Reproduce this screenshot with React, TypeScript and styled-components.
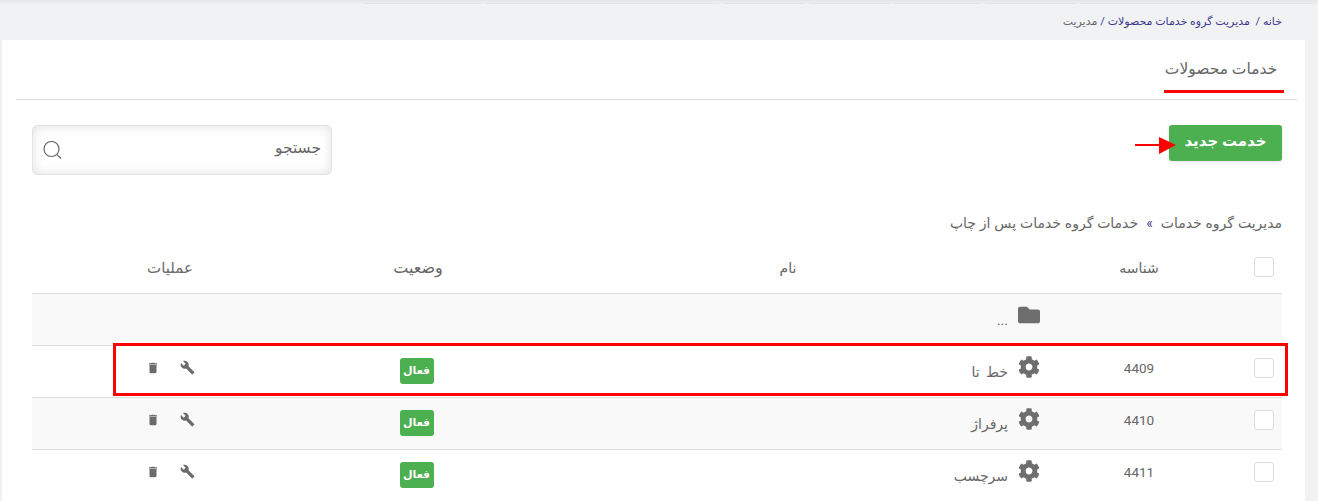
import React from 'react';
import styled, { createGlobalStyle } from 'styled-components';
import { FaCog, FaFolder } from 'react-icons/fa';
import { MdBuild, MdDelete } from 'react-icons/md';

const GlobalStyle = createGlobalStyle`
  html, body {
    margin: 0;
    padding: 0;
    height: 100%;
    overflow: hidden;
    background: #f1f2f4;
    font-family: 'Roboto', 'DejaVu Sans', sans-serif;
    color: #666;
  }
`;

const Page = styled.div`
  direction: rtl;
  position: relative;
  width: 1318px;
  height: 501px;
  overflow: hidden;
  background: #f1f2f4;
`;

const TopBar = styled.div`
  direction: ltr;
  display: flex;
  align-items: flex-end;
  gap: 4px;
  height: 4px;
  padding-left: 363px;
  box-sizing: border-box;
  background: linear-gradient(#e4e5e7, #eff0f2);
`;

const TopSegment = styled.span<{ $width: number }>`
  width: ${(p) => p.$width}px;
  height: 1px;
  background: #e3e4e6;
`;

const Breadcrumb = styled.div`
  display: flex;
  align-items: center;
  gap: 3px;
  height: 36px;
  padding: 0 36px 1px 0;
  box-sizing: border-box;
  font-size: 11px;
  color: #666;
`;

const Crumb = styled.a`
  color: #3d3a8c;
  text-decoration: none;
`;

const Panel = styled.div`
  margin: 0 13px 0 2px;
  height: 470px;
  background: #fff;
  padding: 0 8px 0 0;
  box-sizing: border-box;
`;

const Tabs = styled.div`
  display: flex;
  height: 59px;
  margin-left: 14px;
  border-bottom: 1px solid #ddd;
  padding-right: 13px;
`;

const Tab = styled.div`
  width: 120px;
  height: 53px;
  padding: 8px 6px 0 0;
  box-sizing: border-box;
  display: flex;
  align-items: center;
  justify-content: center;
  border-bottom: 3px solid #f00;
  font-size: 15.5px;
  color: #666;
`;

const Content = styled.div`
  padding: 25px 15px 0 0;
  margin-left: 30px;
`;

const Toolbar = styled.div`
  display: flex;
  justify-content: space-between;
  align-items: flex-start;
`;

const NewButton = styled.button`
  width: 113px;
  height: 36px;
  padding: 0 0 4px;
  border: 0;
  border-radius: 3px;
  background: #4caf50;
  color: #fff;
  font-family: inherit;
  font-size: 15px;
  font-weight: 700;
  box-shadow: 0 1px 3px rgba(0, 0, 0, 0.12);
`;

const SearchBox = styled.div`
  width: 300px;
  height: 50px;
  display: flex;
  align-items: center;
  justify-content: space-between;
  padding: 0 10px;
  box-sizing: border-box;
  border: 1px solid #e3e3e3;
  border-radius: 5px;
  background: #fff;
  box-shadow: inset 0 0 12px rgba(0, 0, 0, 0.12);
  font-size: 15.5px;
  color: #666;
`;

const SearchLabel = styled.span`
  margin-bottom: 4px;
`;

const Trail = styled.div`
  display: flex;
  gap: 8px;
  margin: 38px 0 7px;
  height: 20px;
  align-items: center;
  font-size: 14px;
  word-spacing: 0.4px;
  color: #666;
`;

const TrailSep = styled.span`
  color: #3d3a8c;
`;

const Row = styled.div<{ $striped?: boolean; $head?: boolean }>`
  display: grid;
  grid-template-columns: 44px 198px 504px 236px 1fr;
  align-items: center;
  height: ${(p) => (p.$head ? '53px' : '43px')};
  padding-bottom: ${(p) => (p.$head ? '0' : '8px')};
  background: ${(p) => (p.$striped ? '#f9f9f9' : '#fff')};
  border-bottom: 1px solid #ddd;
  &:last-child {
    border-bottom: 0;
  }
`;

const Cell = styled.div<{ $center?: boolean }>`
  display: flex;
  align-items: center;
  justify-content: ${(p) => (p.$center ? 'center' : 'flex-start')};
  font-size: 14px;
  color: #666;
`;

const HeadLabel = styled.span<{ $size?: number }>`
  font-size: ${(p) => p.$size ?? 14}px;
  margin-top: 2px;
`;

const IdCell = styled(Cell)`
  font-size: 13.5px;
`;

const OpsCell = styled(Cell)`
  padding-left: 8px;
  gap: 20px;
  justify-content: center;
  color: #6b6b6b;
`;

const Check = styled.span`
  width: 18px;
  height: 18px;
  margin-right: 8px;
  border: 1px solid #ddd;
  border-radius: 3px;
  background: #fff;
`;

const NameIcon = styled.span`
  display: inline-flex;
  width: 22px;
  justify-content: center;
  font-size: 22px;
  color: #6e6e6e;
  margin: 0 0 2px 10px;
`;

const NameText = styled.span`
  margin-top: 8px;
  word-spacing: 3px;
`;

const Badge = styled.span`
  width: 34px;
  height: 26px;
  margin: 6px 3px 0 0;
  display: flex;
  align-items: center;
  justify-content: center;
  border-radius: 3px;
  background: #4caf50;
  color: #fff;
  font-size: 11px;
  font-weight: 700;
`;

const Highlight = styled.div`
  position: absolute;
  left: 113px;
  top: 343px;
  width: 1175px;
  height: 53px;
  box-sizing: border-box;
  border: 3px solid #f00;
  pointer-events: none;
`;

const Arrow = styled.svg`
  position: absolute;
  left: 1135px;
  top: 133px;
`;

const segments = [118, 234, 82, 81, 87, 91, 235];

const rows = [
  { id: 4409, name: 'خط تا' },
  { id: 4410, name: 'پرفراژ', striped: true },
  { id: 4411, name: 'سرچسب' },
];

export default function App() {
  return (
    <Page>
      <GlobalStyle />
      <TopBar>
        {segments.map((width, i) => (
          <TopSegment key={i} $width={width} />
        ))}
      </TopBar>
      <Breadcrumb>
        <Crumb>خانه /</Crumb>
        <Crumb>&nbsp;مدیریت گروه خدمات محصولات /</Crumb>
        <span>مدیریت</span>
      </Breadcrumb>
      <Panel>
        <Tabs>
          <Tab>خدمات محصولات</Tab>
        </Tabs>
        <Content>
          <Toolbar>
            <NewButton>خدمت جدید</NewButton>
            <SearchBox>
              <SearchLabel>جستجو</SearchLabel>
              <svg width="19" height="18" viewBox="0 0 19 18" fill="none" stroke="#666" strokeWidth="1.2">
                <circle cx="8.5" cy="8" r="7.5" />
                <path d="M13.8 13.3 18 17.5" />
              </svg>
            </SearchBox>
          </Toolbar>
          <Trail>
            <span>مدیریت گروه خدمات</span>
            <TrailSep>»</TrailSep>
            <span>خدمات گروه خدمات پس از چاپ</span>
          </Trail>
          <Row $head>
            <Cell><Check /></Cell>
            <Cell $center><HeadLabel>شناسه</HeadLabel></Cell>
            <Cell $center><HeadLabel>نام</HeadLabel></Cell>
            <Cell $center><HeadLabel $size={16}>وضعیت</HeadLabel></Cell>
            <OpsCell><HeadLabel $size={15}>عملیات</HeadLabel></OpsCell>
          </Row>
          <Row $striped>
            <Cell />
            <Cell />
            <Cell>
              <NameIcon><FaFolder /></NameIcon>
              <NameText>...</NameText>
            </Cell>
            <Cell />
            <Cell />
          </Row>
          {rows.map((row) => (
            <Row key={row.id} $striped={row.striped}>
              <Cell><Check /></Cell>
              <IdCell $center>{row.id}</IdCell>
              <Cell>
                <NameIcon><FaCog /></NameIcon>
                <NameText>{row.name}</NameText>
              </Cell>
              <Cell $center><Badge>فعال</Badge></Cell>
              <OpsCell>
                <MdBuild size={15} />
                <MdDelete size={14} />
              </OpsCell>
            </Row>
          ))}
        </Content>
      </Panel>
      <Highlight />
      <Arrow width="42" height="24" viewBox="0 0 42 24">
        <path d="M0 12h25" stroke="#f00" strokeWidth="2" />
        <path d="M24 4l17 8-17 9z" fill="#f00" />
      </Arrow>
    </Page>
  );
}
